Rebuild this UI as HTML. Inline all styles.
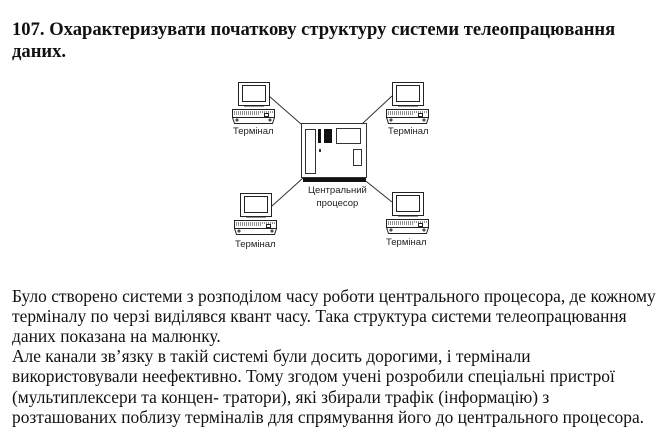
<!DOCTYPE html>
<html><head><meta charset="utf-8"><style>
body{margin:0;width:671px;height:441px;background:#fff;position:relative;overflow:hidden;font-family:"Liberation Serif",serif;color:#111}
.l{position:absolute;left:12px;white-space:nowrap;transform-origin:0 0}
.t{font-weight:bold;font-size:18.6px}
.b{font-size:17.4px}
.lab{position:absolute;font-family:"Liberation Sans",sans-serif;font-size:9.5px;color:#222;white-space:nowrap}
</style></head><body>
<div class="l t" style="top:19px">107. Охарактеризувати початкову структуру системи телеопрацювання</div>
<div class="l t" style="top:41px">даних.</div>

<svg style="position:absolute;left:0;top:0" width="671" height="441">
<g stroke="#333" stroke-width="1" fill="none">
<line x1="269" y1="96" x2="301" y2="124"/>
<line x1="392" y1="96" x2="362" y2="124"/>
<line x1="272" y1="206" x2="303" y2="178"/>
<line x1="362" y1="178" x2="392" y2="202"/>
<rect x="301.5" y="123.5" width="65" height="54"/>
<rect x="305.5" y="129.5" width="10" height="44"/>
<rect x="336.5" y="128.5" width="24" height="15"/>
<rect x="353.5" y="149.5" width="8" height="16"/>
</g>
<rect x="318" y="129" width="3" height="14" fill="#111"/>
<rect x="324" y="129" width="8" height="14" fill="#111"/>
<rect x="319" y="149" width="2" height="3" fill="#333"/>
<rect x="303" y="178" width="63" height="4" fill="#111"/>
<defs>
<g id="term" stroke="#222" fill="none">
<rect x="0.5" y="0.5" width="31" height="23"/>
<rect x="4.5" y="3.5" width="23" height="16"/>
<line x1="6" y1="24" x2="26" y2="24"/>
<path d="M-5.5 27.5h42v8h-42z"/>
<path d="M-4 30h39M-4 32h26" stroke-dasharray="1 1"/>
<rect x="26.5" y="31.5" width="4" height="3"/>
<path d="M-5.5 35.5l2 6h38l2-6"/>
<circle cx="-1" cy="38" r="1"/><circle cx="32" cy="38" r="1"/>
</g>
</defs>
<use href="#term" x="238" y="82"/>
<use href="#term" x="392" y="82"/>
<use href="#term" x="240" y="193"/>
<use href="#term" x="392" y="192"/>
</svg>
<div class="lab" style="left:233px;top:126px">Термінал</div>
<div class="lab" style="left:388px;top:126px">Термінал</div>
<div class="lab" style="left:235px;top:239px">Термінал</div>
<div class="lab" style="left:386px;top:237px">Термінал</div>
<div class="lab" style="left:308px;top:184px;text-align:center;line-height:13px">Центральний<br>процесор</div>

<div class="l b" style="top:286px">Було створено системи з розподілом часу роботи центрального процесора, де кожному</div>
<div class="l b" style="top:306px">терміналу по черзі виділявся квант часу. Така структура системи телеопрацювання</div>
<div class="l b" style="top:326px">даних показана на малюнку.</div>
<div class="l b" style="top:346px">Але канали зв’язку в такій системі були досить дорогими, і термінали</div>
<div class="l b" style="top:366px">використовували неефективно. Тому згодом учені розробили спеціальні пристрої</div>
<div class="l b" style="top:387px">(мультиплексери та концен- тратори), які збирали трафік (інформацію) з</div>
<div class="l b" style="top:407px">розташованих поблизу терміналів для спрямування його до центрального процесора.</div>
</body></html>
